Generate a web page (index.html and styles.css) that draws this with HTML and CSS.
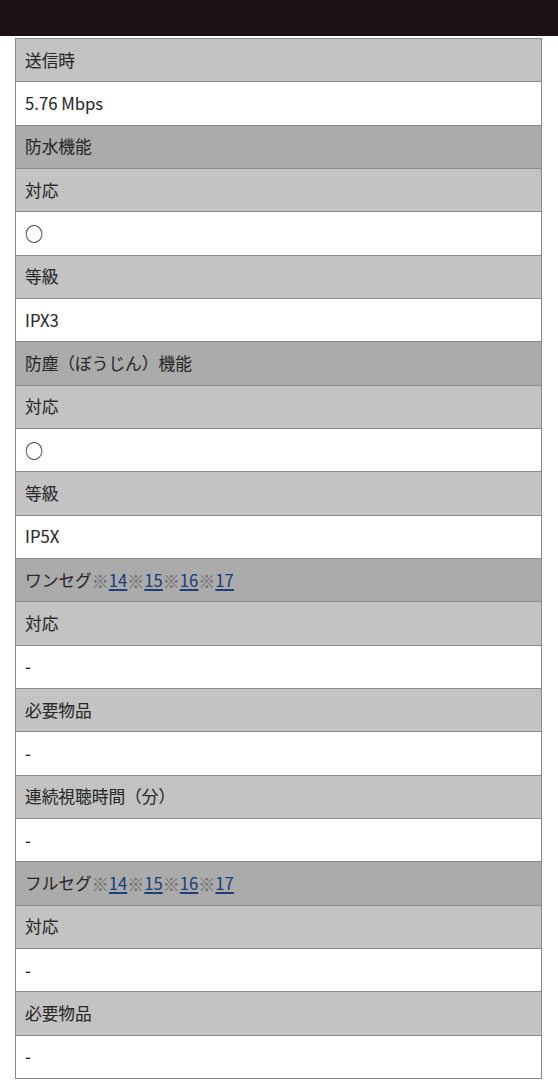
FILE: index.html
```html
<!DOCTYPE html>
<html lang="ja">
<head>
<meta charset="utf-8">
<link rel="stylesheet" href="styles.css">
</head>
<body>
<div class="topbar"></div>
<div class="spec">
  <div class="row sub">送信時</div>
  <div class="row val">5.76 Mbps</div>
  <div class="row sec">防水機能</div>
  <div class="row sub">対応</div>
  <div class="row val"><span class="maru">○</span></div>
  <div class="row sub">等級</div>
  <div class="row val">IPX3</div>
  <div class="row sec">防塵（ぼうじん）機能</div>
  <div class="row sub">対応</div>
  <div class="row val"><span class="maru">○</span></div>
  <div class="row sub">等級</div>
  <div class="row val">IP5X</div>
  <div class="row sec">ワンセグ<span class="kome">※</span><a href="#">14</a><span class="kome">※</span><a href="#">15</a><span class="kome">※</span><a href="#">16</a><span class="kome">※</span><a href="#">17</a></div>
  <div class="row sub">対応</div>
  <div class="row val">-</div>
  <div class="row sub">必要物品</div>
  <div class="row val">-</div>
  <div class="row sub">連続視聴時間（分）</div>
  <div class="row val">-</div>
  <div class="row sec">フルセグ<span class="kome">※</span><a href="#">14</a><span class="kome">※</span><a href="#">15</a><span class="kome">※</span><a href="#">16</a><span class="kome">※</span><a href="#">17</a></div>
  <div class="row sub">対応</div>
  <div class="row val">-</div>
  <div class="row sub">必要物品</div>
  <div class="row val">-</div>
</div>
</body>
</html>
```

FILE: styles.css
```css
html, body {
  margin: 0;
  padding: 0;
  background: #fff;
}
body {
  font-family: "Noto Sans CJK JP", "Noto Sans", sans-serif;
  color: #2a2a2a;
  font-size: 16.7px;
  overflow: hidden;
}
.topbar {
  height: 36px;
  background: #1b1313;
}
.spec {
  margin: 2px 16px 0 15px;
  border: 1px solid #8a8a8a;
  border-bottom: none;
}
.row {
  height: 42.33px;
  border-bottom: 1px solid #8a8a8a;
  display: flex;
  align-items: center;
  padding-left: 9px;
  line-height: 1;
  -webkit-text-stroke: 0.1px #2a2a2a;
}
.sub { background: #c3c3c3; }
.sec { background: #ababab; }
.val { background: #fff; }
.maru {
  font-size: 18px;
  color: #2a2a2a;
}
.kome {
  color: #707070;
  font-size: 17px;
  -webkit-text-stroke: 0.2px #707070;
}
.row a {
  color: #1d3f7a;
  -webkit-text-stroke: 0.1px #1d3f7a;
  text-decoration: underline;
  text-decoration-thickness: 1.5px;
  text-underline-offset: 2px;
}
```
